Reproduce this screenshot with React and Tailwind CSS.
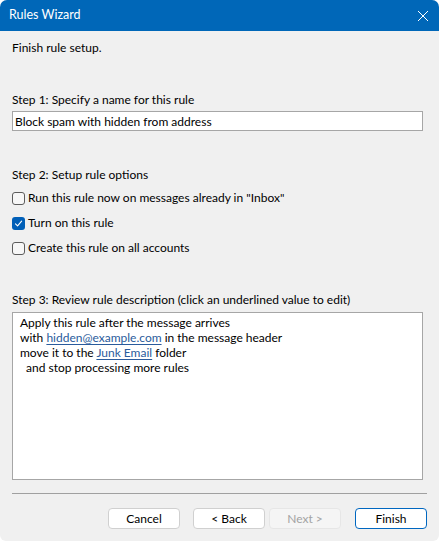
import { useState } from "react";

const font = { fontFamily: 'Lato, "Noto Sans", sans-serif' };

const CheckRow = ({ checked, label, onToggle }) => (
  <div className="flex items-center h-4 cursor-default" onClick={onToggle}>
    {checked ? (
      <span className="w-[13px] h-[13px] rounded-[3px] bg-[#005fb8] flex items-center justify-center">
        <svg width="9" height="9" viewBox="0 0 9 9" fill="none">
          <path d="M1.5 4.8 L3.6 6.8 L7.6 2.2" stroke="white" strokeWidth="1.1" strokeLinecap="round" strokeLinejoin="round" />
        </svg>
      </span>
    ) : (
      <span className="w-[13px] h-[13px] rounded-[3px] border border-[#5c5c5c] bg-[#f7f7f7]" />
    )}
    <span className="ml-[3px] text-[12px] text-black">{label}</span>
  </div>
);

const Btn = ({ children, primary, disabled, className = "" }) => (
  <button
    disabled={disabled}
    className={`h-[21px] w-[72px] rounded-[4px] text-[12px] leading-none ${
      disabled
        ? "bg-[#f5f5f5] border border-[#e6e6e6] text-[#a3a3a3]"
        : primary
        ? "bg-white border border-[#0067c0] text-black"
        : "bg-white border border-[#d0d0d0] text-black"
    } ${className}`}
    style={font}
  >
    {children}
  </button>
);

export default function App() {
  const [opts, setOpts] = useState([false, true, false]);
  const [name, setName] = useState("Block spam with hidden from address");
  const toggle = (i) => setOpts(opts.map((v, j) => (j === i ? !v : v)));

  return (
    <div className="w-[439px] h-[541px] bg-white" style={font}>
      <div className="w-full h-full rounded-t-[7px] rounded-b-[6px] overflow-hidden bg-[#f0f0f0] flex flex-col">
        <div className="h-[31px] bg-[#0067b8] flex items-center justify-between pl-[9px] pr-[10px] shrink-0">
          <span className="text-white text-[12.5px]">Rules Wizard</span>
          <svg width="12" height="12" viewBox="0 0 12 12">
            <path d="M1 1 L11 11 M11 1 L1 11" stroke="white" strokeWidth="1" />
          </svg>
        </div>

        <div className="flex flex-col px-3 text-[12px] text-black">
          <div className="mt-[9px] leading-4">Finish rule setup.</div>

          <div className="mt-[36px] leading-4">Step 1: Specify a name for this rule</div>
          <input
            value={name}
            onChange={(e) => setName(e.target.value)}
            className="mt-[3px] h-[20px] w-[411px] bg-white border border-[#a6a6a6] px-[2px] text-[12px] text-black outline-none"
            style={font}
          />

          <div className="mt-[36px] leading-4">Step 2: Setup rule options</div>
          <div className="mt-[7px] flex flex-col gap-[9px]">
            <CheckRow checked={opts[0]} onToggle={() => toggle(0)} label={'Run this rule now on messages already in "Inbox"'} />
            <CheckRow checked={opts[1]} onToggle={() => toggle(1)} label="Turn on this rule" />
            <CheckRow checked={opts[2]} onToggle={() => toggle(2)} label="Create this rule on all accounts" />
          </div>

          <div className="mt-[36px] leading-4">Step 3: Review rule description (click an underlined value to edit)</div>
          <div className="mt-[4px] h-[168px] w-[411px] bg-white border border-[#a6a6a6] pl-[7px] pt-[2px] leading-[15px]">
            <div>Apply this rule after the message arrives</div>
            <div>
              with <span className="text-[#2a5b9c] underline underline-offset-2">hidden@example.com</span> in the message header
            </div>
            <div>
              move it to the <span className="text-[#2a5b9c] underline underline-offset-2">Junk Email</span> folder
            </div>
            <div className="pl-[6px]">and stop processing more rules</div>
          </div>

          <div className="mt-[13px] h-px w-[415px] bg-[#a0a0a0]" />

          <div className="mt-[14px] flex justify-end w-[415px]">
            <Btn>Cancel</Btn>
            <Btn className="ml-[13px]">&lt; Back</Btn>
            <Btn disabled className="ml-[4px] w-[70px]">Next &gt;</Btn>
            <Btn primary className="ml-[14px]">Finish</Btn>
          </div>
        </div>
      </div>
    </div>
  );
}
